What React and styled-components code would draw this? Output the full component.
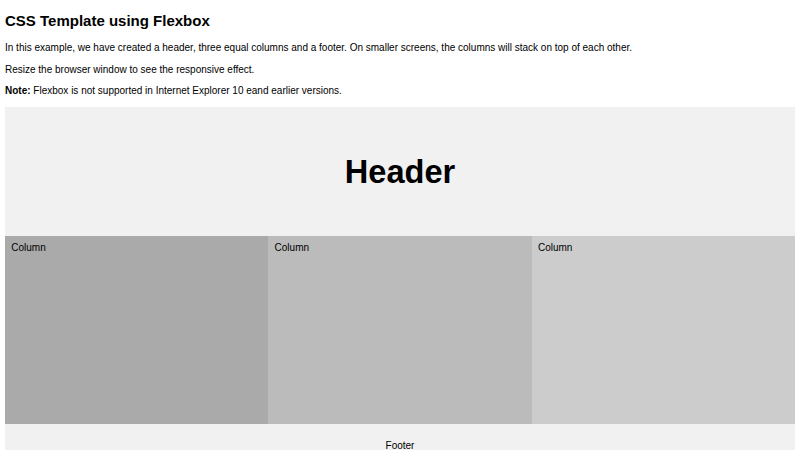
import React from "react";
import styled, { createGlobalStyle } from "styled-components";

const Global = createGlobalStyle`
  *, *::before, *::after { box-sizing: border-box; }
  html { margin: 0; padding: 0; background: #fff; }
  body {
    margin: 0 5px;
    font-family: "Liberation Sans", Arial, Helvetica, sans-serif;
    font-size: 10px;
    line-height: 11.5px;
    color: #000;
  }
`;

const Title = styled.h2`
  font-size: 15px;
  font-weight: bold;
  line-height: 17.25px;
  margin: 12.45px 0;
`;

const Para = styled.p`
  margin: 10px 0;
`;

const Header = styled.div`
  background: #f1f1f1;
  padding: 18.75px;
  text-align: center;
`;

const HeaderTitle = styled.h2`
  margin: 27.2px 0;
  font-size: 32.6px;
  line-height: 37.7px;
  font-weight: bold;
`;

const Row = styled.div`
  display: flex;
`;

const Column = styled.div`
  flex: 1;
  height: 187.5px;
  padding: 6.25px;
  background: ${(p) => p.$bg};
`;

const Footer = styled.div`
  background: #f1f1f1;
  padding: 6.25px;
  text-align: center;
`;

export default function App() {
  return (
    <>
      <Global />
      <Title>CSS Template using Flexbox</Title>
      <Para>In this example, we have created a header, three equal columns and a footer. On smaller screens, the columns will stack on top of each other.</Para>
      <Para>Resize the browser window to see the responsive effect.</Para>
      <Para><b>Note:</b> Flexbox is not supported in Internet Explorer 10 eand earlier versions.</Para>
      <Header>
        <HeaderTitle>Header</HeaderTitle>
      </Header>
      <Row>
        <Column $bg="#aaa">Column</Column>
        <Column $bg="#bbb">Column</Column>
        <Column $bg="#ccc">Column</Column>
      </Row>
      <Footer>
        <Para>Footer</Para>
      </Footer>
    </>
  );
}
